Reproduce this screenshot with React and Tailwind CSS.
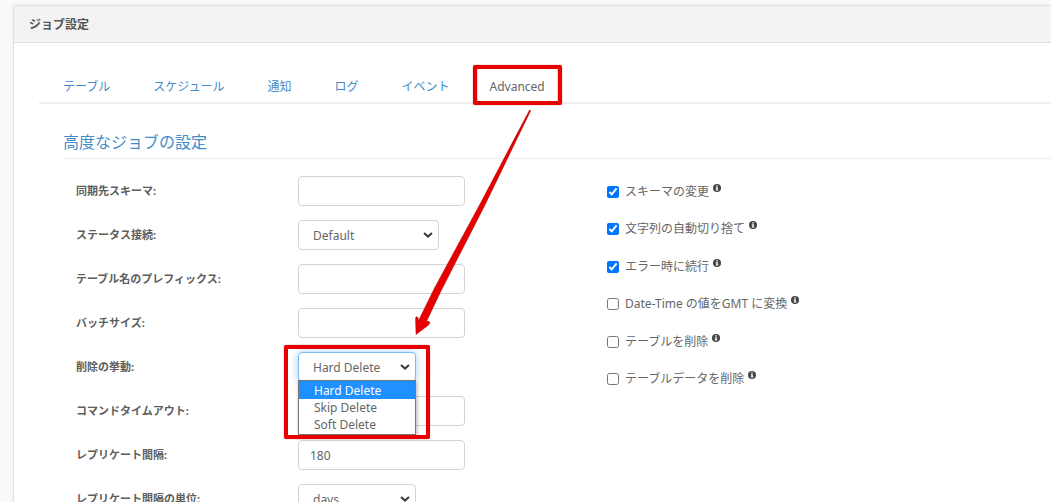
import React from "react";

const tabs = ["テーブル", "スケジュール", "通知", "ログ", "イベント"];

const checks = [
  { id: "alter-schema", label: "スキーマの変更", on: true },
  { id: "truncate-strings", label: "文字列の自動切り捨て", on: true },
  { id: "continue-on-error", label: "エラー時に続行", on: true },
  { id: "gmt", label: "Date-Time の値をGMT に変換", on: false },
  { id: "drop-table", label: "テーブルを削除", on: false },
  { id: "truncate-table", label: "テーブルデータを削除", on: false },
];

function Chevron() {
  return (
    <svg viewBox="0 0 10 6" className="pointer-events-none absolute right-[6px] top-3 h-[6px] w-[10px]" fill="none" stroke="#3c3c3c" strokeWidth="2">
      <path d="M1 1l4 3.6L9 1" />
    </svg>
  );
}

function InfoIcon() {
  return (
    <svg viewBox="0 0 16 16" className="mb-2 ml-1 h-2 w-2" aria-hidden="true">
      <circle cx="8" cy="8" r="8" fill="#444" />
      <path fill="#fff" d="M6.5 2.4h3v2.6h-3zM5.4 6.4h4.2v5h1.2v1.8H5.4v-1.8h1.2V8.2H5.4z" />
    </svg>
  );
}

function Row({ id, label, children }) {
  return (
    <div className="flex h-[30px] items-center">
      <label htmlFor={id} className="w-[222px] shrink-0 text-[11px] font-bold leading-[30px] text-[#5e5e5e]">
        {label}
      </label>
      {children}
    </div>
  );
}

function TextField({ id, value }) {
  return (
    <input
      id={id}
      type="text"
      defaultValue={value}
      className="h-[30px] w-[167px] rounded-[4px] border border-[#d4d4d4] bg-white px-[11px] text-[12px] text-[#666] outline-none"
    />
  );
}

function SelectField({ id, options, wide, active, children }) {
  return (
    <div className={wide ? "relative w-[141px]" : "relative w-[118px]"}>
      <select
        id={id}
        className={
          "block h-[30px] w-full appearance-none rounded-[4px] border bg-white pl-[14px] pr-4 pt-[2px] text-[12px] text-[#666] outline-none " +
          (active ? "border-[#7fbcec] shadow-[0_0_8px_rgba(102,175,233,0.6)]" : "border-[#d4d4d4]")
        }
      >
        {options.map((o) => (
          <option key={o}>{o}</option>
        ))}
      </select>
      <Chevron />
      {children}
    </div>
  );
}

const deleteOptions = ["Hard Delete", "Skip Delete", "Soft Delete"];

export default function App() {
  return (
    <div className="h-screen overflow-hidden bg-[#fafafa] pl-[13px] pt-[5px] font-['Noto_Sans','Noto_Sans_CJK_JP',sans-serif] text-[12px] text-[#666]">
      <section className="relative min-h-screen rounded-tl-[3px] border-l border-t border-[#e0e0e0] bg-white shadow-[0_0_5px_rgba(0,0,0,0.06)]">
        <header className="flex h-[37px] items-center border-b border-[#e0e0e0] bg-[#f3f3f3] pl-[15px] pt-[2px]">
          <h1 className="font-bold leading-5 text-[#555]">ジョブ設定</h1>
        </header>

        <div className="pl-[25px] pt-[25px]">
          <nav className="flex h-9 items-stretch border-b-2 border-[#eee] pl-2">
            {tabs.map((t) => (
              <a key={t} href="#" className="mr-[11px] flex items-center px-4 pt-1 text-[#428bca]">
                {t}
              </a>
            ))}
            <a href="#" aria-current="page" className="relative -mb-[2px] flex items-center border-x border-t border-[#ddd] bg-white px-3 text-[#666]">
              Advanced
              <span className="pointer-events-none absolute -inset-x-[5px] -bottom-[1px] -top-[4px] rounded-[2px] border-4 border-[#e60000] shadow-[0_0_1px_#700]" />
            </a>
          </nav>

          <div className="pl-6 pt-[26px]">
            <h2 className="border-b border-[#eee] pb-1 text-[16px] leading-6 text-[#428bca]">高度なジョブの設定</h2>

            <div className="flex pl-[13px]">
              <form className="flex w-[531px] shrink-0 flex-col gap-[14px] pt-[17px]">
                <Row id="schema" label="同期先スキーマ:">
                  <TextField id="schema" />
                </Row>
                <Row id="status" label="ステータス接続:">
                  <SelectField id="status" options={["Default"]} wide />
                </Row>
                <Row id="prefix" label="テーブル名のプレフィックス:">
                  <TextField id="prefix" />
                </Row>
                <Row id="batch" label="バッチサイズ:">
                  <TextField id="batch" />
                </Row>
                <Row id="delete" label="削除の挙動:">
                  <SelectField id="delete" options={deleteOptions} active>
                    <ul role="listbox" aria-label="削除の挙動" className="absolute inset-x-0 top-[28px] z-10 border border-[#777] bg-white pb-px shadow-[1px_2px_4px_rgba(0,0,0,0.3)]">
                      {deleteOptions.map((o, i) => (
                        <li
                          key={o}
                          role="option"
                          aria-selected={i === 0}
                          className={"pl-[15px] leading-[17px] " + (i === 0 ? "bg-[#1e90ff] pt-px text-white" : "text-[#666]")}
                        >
                          {o}
                        </li>
                      ))}
                    </ul>
                    <span className="pointer-events-none absolute -left-[14px] -right-[14px] -top-[7px] z-20 h-[94px] rounded-[2px] border-4 border-[#e60000] shadow-[0_0_1px_#700]" />
                  </SelectField>
                </Row>
                <Row id="timeout" label="コマンドタイムアウト:">
                  <TextField id="timeout" />
                </Row>
                <Row id="interval" label="レプリケート間隔:">
                  <TextField id="interval" value="180" />
                </Row>
                <Row id="unit" label="レプリケート間隔の単位:">
                  <SelectField id="unit" options={["days"]} />
                </Row>
              </form>

              <div className="mt-[14px] grid h-[225px] grid-rows-6">
                {checks.map((c) => (
                  <div key={c.id} className="flex items-center">
                    <input id={c.id} type="checkbox" defaultChecked={c.on} className="mr-[6px] h-3 w-3 accent-[#0075ff]" />
                    <label htmlFor={c.id}>{c.label}</label>
                    <InfoIcon />
                  </div>
                ))}
              </div>
            </div>
          </div>
        </div>

        <svg viewBox="0 0 120 230" className="pointer-events-none absolute left-[400px] top-[102px] z-30 h-[230px] w-[120px]" aria-hidden="true">
          <path
            d="M115.500 2L116.800 2.500L70 99L27.500 182L12.500 213.500Q15.500 212.500 15.800 214.500Q16 216 14 217.500L2 226.500L1.500 210.500Q1.600 208.500 3 208.700Q4.300 209 4.500 212.500L20.500 180L66 96Z"
            fill="#e60000"
            stroke="#a00000"
            strokeWidth="0.4"
            strokeLinejoin="round"
          />
        </svg>
      </section>
    </div>
  );
}
